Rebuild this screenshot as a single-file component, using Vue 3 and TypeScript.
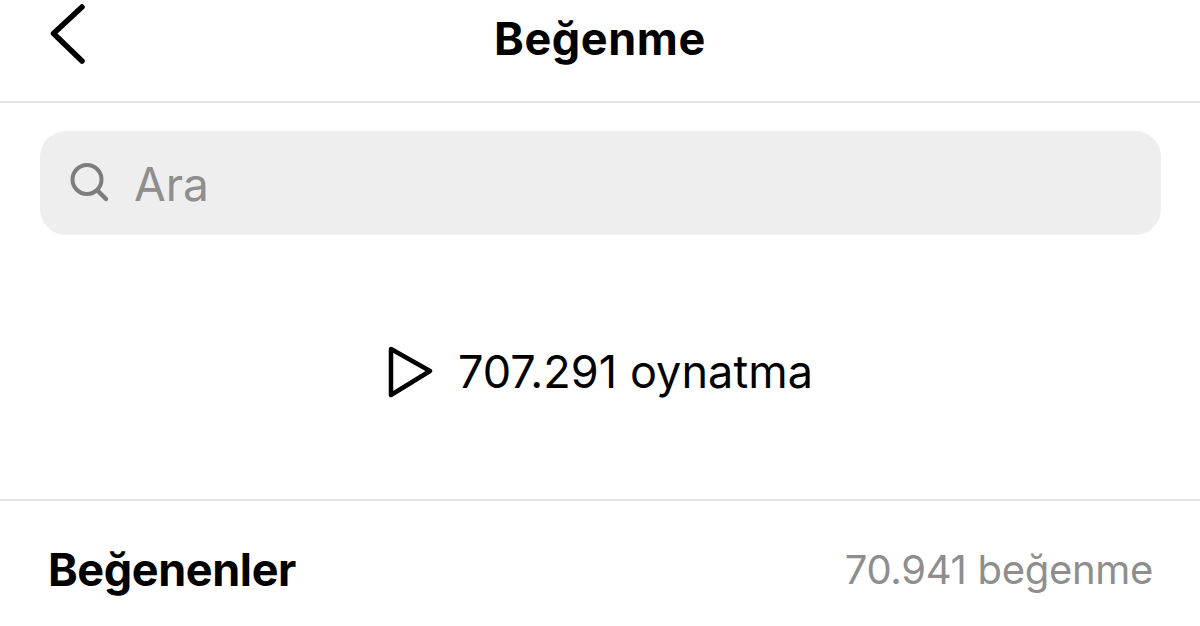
<script setup lang="ts">
const title: string = 'Beğenme'
</script>

<template>
  <main class="page">
    <header class="top">
      <button class="back" aria-label="Geri">
        <svg width="40" height="64" viewBox="0 0 40 64" fill="none">
          <path d="M36 7 L7.5 33.5 L36 61" stroke="#000" stroke-width="5.5" stroke-linecap="round" stroke-linejoin="round" />
        </svg>
      </button>
      <h1>{{ title }}</h1>
    </header>
    <div class="search-wrap">
      <div class="search">
        <svg width="42" height="42" viewBox="0 0 42 42" fill="none">
          <circle cx="18" cy="17.5" r="14.5" stroke="#7d7d7d" stroke-width="4" />
          <path d="M28.5 28.5 L37 37" stroke="#7d7d7d" stroke-width="4.5" stroke-linecap="round" />
        </svg>
        <span class="placeholder">Ara</span>
      </div>
    </div>
    <section class="plays">
      <svg width="48" height="52" viewBox="0 0 48 52" fill="none">
        <path d="M4 3 L43 25 L4 49 Z" stroke="#000" stroke-width="4.5" stroke-linejoin="round" />
      </svg>
      <span>707.291 oynatma</span>
    </section>
    <section class="likes">
      <strong>Beğenenler</strong>
      <span>70.941 beğenme</span>
    </section>
  </main>
</template>

<style>
html, body { margin: 0; background: #fff; }
</style>

<style scoped>
.page {
  width: 1200px;
  height: 626px;
  overflow: hidden;
  background: #fff;
  color: #000;
  font-family: Inter, "Liberation Sans", sans-serif;
}
.top {
  height: 101px;
  border-bottom: 2px solid #e4e4e4;
  display: flex;
  justify-content: center;
  position: relative;
}
.back {
  position: absolute;
  left: 46px;
  top: 0;
  padding: 0;
  border: 0;
  background: none;
}
h1 {
  margin: 0;
  font-size: 45px;
  font-weight: 700;
  letter-spacing: 0.6px;
  line-height: 78px;
}
.search-wrap { padding: 28px 39px 0 40px; }
.search {
  height: 104px;
  border-radius: 26px;
  background: #eeeeee;
  display: flex;
  align-items: center;
  gap: 23px;
  padding-left: 29px;
  color: #8e8e8e;
  font-size: 46px;
}
.placeholder { padding-top: 2px; }
.plays {
  height: 266px;
  padding-top: 8px;
  box-sizing: border-box;
  border-bottom: 2px solid #e4e4e4;
  display: flex;
  align-items: center;
  justify-content: center;
  gap: 23px;
  font-size: 45px;
  letter-spacing: 0.07px;
}
.plays svg { margin-top: 2px; }
.likes {
  display: flex;
  align-items: center;
  justify-content: space-between;
  height: 136px;
  padding: 0 47px 0 48px;
}
.likes strong { font-size: 45px; font-weight: 700; letter-spacing: -0.4px; }
.likes span { font-size: 40px; color: #8e8e8e; letter-spacing: -0.3px; }
</style>
